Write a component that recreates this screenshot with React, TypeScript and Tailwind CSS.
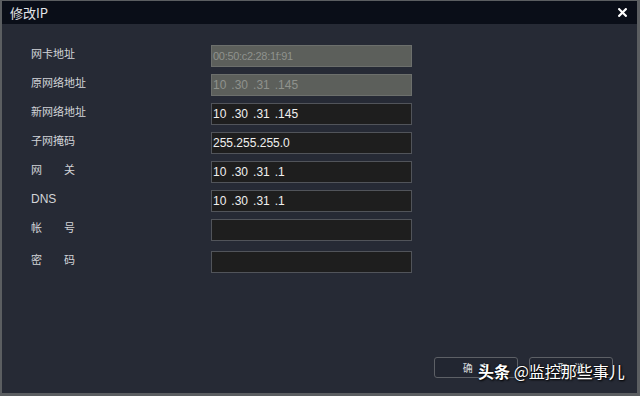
export default function App() {
  const rows: { label: string; value: string[]; disabled?: boolean; spaced?: boolean; mac?: boolean }[] = [
    { label: '网卡地址', value: ['00:50:c2:28:1f:91'], disabled: true, mac: true },
    { label: '原网络地址', value: ['10', '.30', '.31', '.145'], disabled: true },
    { label: '新网络地址', value: ['10', '.30', '.31', '.145'] },
    { label: '子网掩码', value: ['255.255.255.0'] },
    { label: '网', value: ['10', '.30', '.31', '.1'], spaced: true },
    { label: 'DNS', value: ['10', '.30', '.31', '.1'] },
    { label: '帐', value: [], spaced: true },
    { label: '密', value: [], spaced: true },
  ];
  const second: Record<string, string> = { 网: '关', 帐: '号', 密: '码' };

  return (
    <div
      className="relative w-[640px] h-[396px] bg-[#5b5e61] pl-[2px] pt-[1px] pr-[3px] pb-[3px]"
      style={{ fontFamily: '"Noto Sans CJK SC", "Liberation Sans", sans-serif' }}
    >
      <div className="flex flex-col h-full">
        {/* Title bar */}
        <div className="h-[23px] bg-[#0a0e18] flex items-center justify-between pl-[8px] pr-[10px]">
          <span className="text-[13px] text-[#e4e6ea] leading-none">修改IP</span>
          <svg width="9" height="9" viewBox="0 0 9 9">
            <path d="M1.2 1.2 L7.8 7.8 M7.8 1.2 L1.2 7.8" stroke="#ffffff" strokeWidth="2.2" strokeLinecap="square" />
          </svg>
        </div>

        {/* Body */}
        <div className="flex-1 bg-[#262a35] flex flex-col pt-[21px] pl-[29px] pr-[24px] pb-[15px]">
          <div className="flex flex-col">
            {rows.map((r, i) => (
              <div
                key={i}
                className={`flex items-center h-[22px] ${i === 0 ? '' : i === 7 ? 'mt-[10px]' : 'mt-[7px]'}`}
              >
                <div className="w-[180px] text-[11px] text-[#d2d4d8] leading-none -mt-[5px] flex">
                  {r.spaced ? (
                    <>
                      <span className="w-[33px]">{r.label}</span>
                      <span>{second[r.label]}</span>
                    </>
                  ) : (
                    <span style={r.label === 'DNS' ? { fontFamily: '"Liberation Sans", sans-serif', fontSize: 12 } : undefined}>
                      {r.label}
                    </span>
                  )}
                </div>
                <div
                  className={`w-[201px] h-[22px] border flex items-center gap-[5px] pl-[1px] leading-none ${
                    r.mac ? 'text-[11px] tracking-[-0.3px]' : 'text-[12px]'
                  } ${
                    r.disabled
                      ? 'bg-[#5c5f5b] border-[#6c6f6c] text-[#8f928d]'
                      : 'bg-[#1e1e1e] border-[#51545a] text-[#f0f0f0]'
                  }`}
                  style={{ fontFamily: '"Liberation Sans", sans-serif' }}
                >
                  {r.value.map((v, j) => (
                    <span key={j}>{v}</span>
                  ))}
                </div>
              </div>
            ))}
          </div>

          <div className="flex-1" />

          <div className="flex justify-end gap-[11px]">
            <button className="w-[84px] h-[21px] rounded-[3px] border border-[#5d6066] bg-[#222631] text-[10px] text-[#d8dadd] whitespace-pre leading-none">
              确   定
            </button>
            <button className="w-[84px] h-[21px] rounded-[3px] border border-[#5d6066] bg-[#222631] text-[10px] text-[#d8dadd] whitespace-pre leading-none">
              取   消
            </button>
          </div>
        </div>
      </div>

      {/* Watermark overlay */}
      <div
        className="absolute left-[478px] top-[363px] text-[16px] font-bold text-white leading-none whitespace-nowrap"
        style={{ textShadow: '0 0 2px #000, 1px 1px 2px #000' }}
      >
        头条 <span className="font-normal">@监控那些事儿</span>
      </div>
    </div>
  );
}
